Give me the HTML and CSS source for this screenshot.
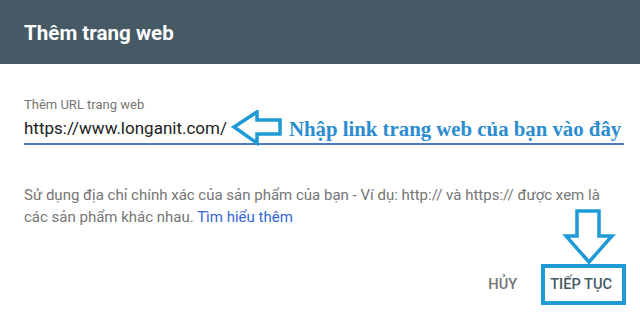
FILE: index.html
```html
<!DOCTYPE html>
<html lang="vi">
<head>
<meta charset="utf-8">
<title>Thêm trang web</title>
<link rel="stylesheet" href="styles.css">
</head>
<body>
<div class="dialog">
  <header class="header"><h1 class="title">Thêm trang web</h1></header>
  <main class="content">
    <div class="field">
      <div class="label">Thêm URL trang web</div>
      <div class="input-row">
        <span class="url">https://www.longanit.com/</span>
        <svg class="left-arrow" width="52" height="36" viewBox="0 0 52 36" aria-hidden="true">
          <polygon points="3,17 26,2 26,10 49,10 49,24 26,24 26,33" fill="#fff" stroke="#1e9ad6" stroke-width="3.5" stroke-linejoin="miter"/>
        </svg>
        <span class="note">Nhập link trang web của bạn vào đây</span>
      </div>
    </div>
    <p class="help">Sử dụng địa chỉ chính xác của sản phẩm của bạn - Ví dụ: http:// và https:// được xem là các sản phẩm khác nhau. <a class="link" href="#">Tìm hiểu thêm</a></p>
  </main>
  <div class="actions">
    <button class="btn cancel">HỦY</button>
    <button class="btn next">TIẾP TỤC</button>
  </div>
  <svg class="overlay" width="640" height="312" viewBox="0 0 640 312" aria-hidden="true">
    <polygon points="577,211 599,211 599,236 612,236 589,262 566,236 577,236" fill="#fff" stroke="#1e9ad6" stroke-width="3.5"/>
    <rect x="543" y="266" width="81" height="37" fill="none" stroke="#1e9ad6" stroke-width="4"/>
  </svg>
</div>
</body>
</html>
```
FILE: styles.css
```css
html, body {
  margin: 0;
  padding: 0;
  background: #fff;
}
body {
  font-family: Roboto, "Noto Sans", "Liberation Sans", sans-serif;
}
.dialog {
  position: relative;
  width: 640px;
  height: 312px;
  overflow: hidden;
}
.header {
  height: 64px;
  background: #455a64;
  display: flex;
  align-items: center;
  padding: 0 24px;
}
.title {
  margin: 0;
  font-size: 20.6px;
  font-weight: 700;
  color: #fff;
  line-height: 24px;
  padding-top: 2px;
}
.content {
  padding: 0 16px 0 24px;
}
.field {
  margin-top: 33px;
  border-bottom: 2px solid #4f7cc0;
}
.label {
  font-size: 13px;
  line-height: 16px;
  color: #757575;
}
.input-row {
  display: flex;
  align-items: center;
  height: 30px;
}
.url {
  font-size: 17px;
  color: #212121;
  line-height: 24px;
}
.left-arrow {
  margin-left: 4px;
  flex: none;
}
.note {
  margin-left: 6px;
  font-family: "Liberation Serif", "Times New Roman", serif;
  font-weight: 700;
  font-size: 20.8px;
  color: #2b8ccf;
  white-space: nowrap;
  line-height: 24px;
  padding-top: 2px;
}
.help {
  margin: 39px 0 0 0;
  font-size: 15px;
  line-height: 22px;
  color: #757575;
}
.link {
  color: #3367d6;
  text-decoration: none;
}
.actions {
  display: flex;
  justify-content: flex-end;
  gap: 17px;
  padding-right: 20px;
  margin-top: 38px;
}
.btn {
  border: 0;
  background: none;
  font-family: Roboto, "Noto Sans", "Liberation Sans", sans-serif;
  font-size: 14.6px;
  font-weight: 500;
  height: 36px;
  padding: 0 8px;
  cursor: pointer;
}
.cancel {
  color: #757575;
}
.next {
  color: #455a64;
}
.overlay {
  position: absolute;
  top: 0;
  left: 0;
  pointer-events: none;
}
```
